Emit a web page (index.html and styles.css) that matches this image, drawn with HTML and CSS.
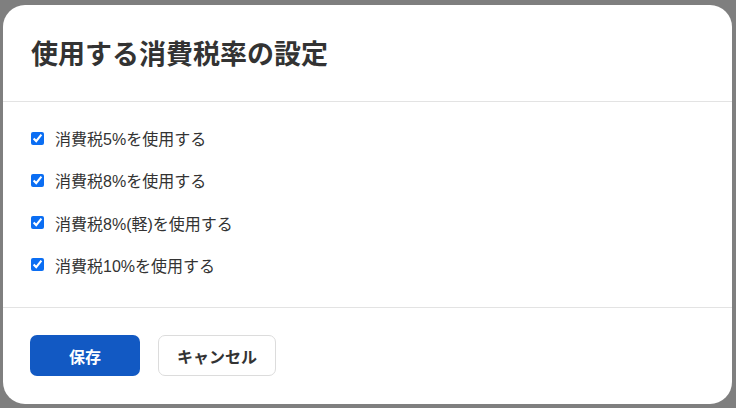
FILE: index.html
```html
<!DOCTYPE html>
<html lang="ja">
<head>
<meta charset="utf-8">
<link rel="stylesheet" href="styles.css">
</head>
<body>
<div class="backdrop">
  <div class="modal">
    <div class="modal-header">
      <h1 class="modal-title">使用する消費税率の設定</h1>
    </div>
    <div class="modal-body">
      <label class="row"><input type="checkbox" checked><span>消費税5%を使用する</span></label>
      <label class="row"><input type="checkbox" checked><span>消費税8%を使用する</span></label>
      <label class="row"><input type="checkbox" checked><span>消費税8%(軽)を使用する</span></label>
      <label class="row"><input type="checkbox" checked><span>消費税10%を使用する</span></label>
    </div>
    <div class="modal-footer">
      <button class="btn btn-primary">保存</button>
      <button class="btn btn-secondary">キャンセル</button>
    </div>
  </div>
</div>
</body>
</html>
```

FILE: styles.css
```css
html, body {
  margin: 0;
  padding: 0;
  width: 736px;
  height: 408px;
  overflow: hidden;
}
body {
  background: #7f7f7f;
  font-family: "Liberation Sans", "Noto Sans CJK JP", sans-serif;
  color: #333;
}
.backdrop {
  padding: 5px 4px 4px 3px;
  height: 408px;
  box-sizing: border-box;
}
.modal {
  background: #fff;
  border-radius: 22px;
  height: 399px;
  display: flex;
  flex-direction: column;
  overflow: hidden;
}
.modal-header {
  height: 97px;
  flex: none;
  box-sizing: border-box;
  padding: 0 28px 2px;
  display: flex;
  align-items: center;
  border-bottom: 1px solid #e3e3e3;
}
.modal-title {
  margin: 0;
  font-size: 27px;
  font-weight: 700;
  color: #333;
}
.modal-body {
  padding: 25px 28px 0;
  height: 206px;
  flex: none;
  box-sizing: border-box;
  border-bottom: 1px solid #e3e3e3;
  display: flex;
  flex-direction: column;
  gap: 20.3px;
}
.row {
  display: flex;
  align-items: center;
  height: 22px;
  font-size: 16px;
  color: #333;
}
.row input {
  width: 13px;
  height: 13px;
  margin: 0 11px 0 0;
  accent-color: #0b6ef3;
}
.modal-footer {
  display: flex;
  gap: 18px;
  padding: 27px 27px 0;
}
.btn {
  height: 41px;
  border-radius: 7px;
  font-family: "Liberation Sans", "Noto Sans CJK JP", sans-serif;
  font-size: 16px;
  font-weight: 700;
  cursor: pointer;
}
.btn-primary {
  width: 110px;
  background: #1259c3;
  border: none;
  color: #fff;
}
.btn-secondary {
  width: 118px;
  background: #fff;
  border: 1px solid #dcdcdc;
  color: #333;
}
```
